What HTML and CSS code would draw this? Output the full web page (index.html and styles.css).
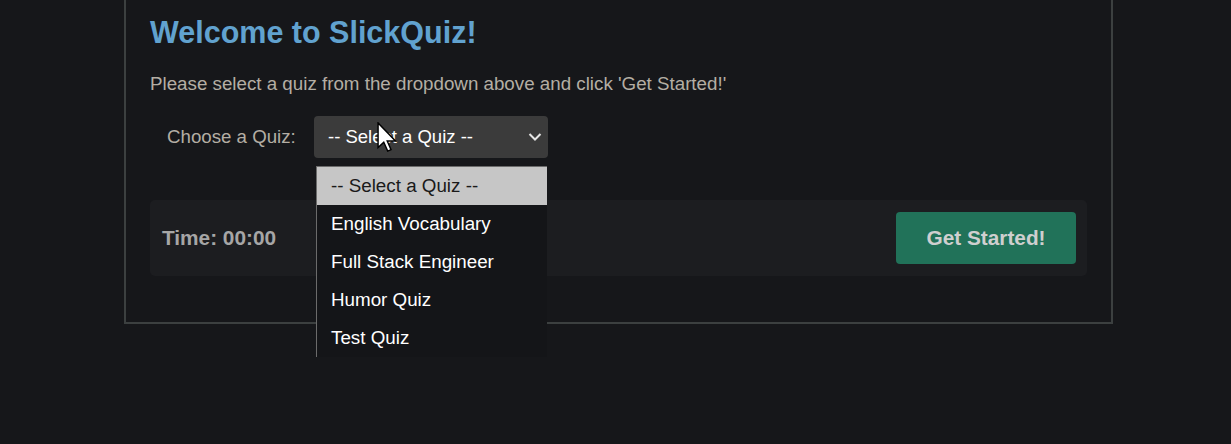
FILE: index.html
```html
<!DOCTYPE html>
<html lang="en">
<head>
<meta charset="utf-8">
<title>SlickQuiz</title>
<link rel="stylesheet" href="styles.css">
</head>
<body>
<div class="container">
  <h1 class="title">Welcome to SlickQuiz!</h1>
  <p class="intro">Please select a quiz from the dropdown above and click 'Get Started!'</p>
  <div class="chooser">
    <label class="chooser-label">Choose a Quiz:</label>
    <div class="select-wrap">
      <div class="select">
        <span class="select-text">-- Select a Quiz --</span>
        <svg class="chevron" width="16" height="16" viewBox="0 0 16 16"><path d="M2.5 5 L8 10.5 L13.5 5" fill="none" stroke="#e6e6e6" stroke-width="2"/></svg>
      </div>
      <ul class="options">
        <li class="option selected">-- Select a Quiz --</li>
        <li class="option">English Vocabulary</li>
        <li class="option">Full Stack Engineer</li>
        <li class="option">Humor Quiz</li>
        <li class="option">Test Quiz</li>
      </ul>
      <svg class="cursor" width="20" height="30" viewBox="0 0 12.5 19"><path d="M0.6 0.6 L0.6 16.2 L4.2 12.8 L6.7 18.4 L8.8 17.5 L6.4 12 L11.6 12 Z" fill="#fff" stroke="#000" stroke-width="0.9" stroke-linejoin="miter"/></svg>
    </div>
  </div>
  <div class="bar">
    <span class="time">Time: 00:00</span>
    <button class="start">Get Started!</button>
  </div>
</div>
</body>
</html>
```
FILE: styles.css
```css
* { box-sizing: border-box; }
html, body { margin: 0; padding: 0; }
body {
  background: #16171a;
  font-family: "Liberation Sans", Arial, sans-serif;
  height: 444px;
  overflow: hidden;
}
.container {
  margin-left: 124px;
  width: 989px;
  border: 2px solid #3c4040;
  border-top: 0;
  padding: 14px 24px 46px 24px;
}
.title {
  margin: 0;
  font-size: 30.5px;
  line-height: 36px;
  font-weight: bold;
  color: #61a2cf;
}
.intro {
  margin: 23px 0 0 0;
  font-size: 18.75px;
  line-height: 22px;
  color: #b4aea4;
}
.chooser {
  display: flex;
  align-items: center;
  margin-top: 21px;
  padding-left: 17px;
}
.chooser-label {
  font-size: 18.7px;
  color: #b4aea4;
  width: 147px;
}
.select-wrap { position: relative; }
.select {
  width: 234px;
  height: 42px;
  background: #3b3b3b;
  border-radius: 4px;
  display: flex;
  align-items: center;
  justify-content: space-between;
  padding: 0 5px 0 14px;
}
.select-text { font-size: 18.5px; color: #fff; }
.chevron { display: block; }
.options {
  position: absolute;
  left: 2px;
  top: 50px;
  width: 231px;
  margin: 0;
  padding: 0;
  list-style: none;
  background: #141518;
  border-top: 1px solid #6b6b6b;
  border-left: 1px solid #6b6b6b;
  z-index: 2;
}
.option {
  height: 38px;
  line-height: 38px;
  padding-left: 14px;
  font-size: 18.8px;
  color: #fff;
}
.option.selected { background: #c6c6c6; color: #1a1a1a; }
.cursor {
  position: absolute;
  left: 63px;
  top: 6px;
  z-index: 3;
}
.bar {
  margin-top: 42px;
  background: #1c1d20;
  border-radius: 5px;
  padding: 12px 11px 12px 12px;
  display: flex;
  align-items: center;
  justify-content: space-between;
}
.time {
  font-size: 20.8px;
  font-weight: bold;
  color: #a6a6a6;
}
.start {
  width: 180px;
  height: 52px;
  background: #217259;
  border: 0;
  border-radius: 4px;
  color: #cfcfcf;
  font-family: inherit;
  font-size: 20.8px;
  font-weight: bold;
}
```
